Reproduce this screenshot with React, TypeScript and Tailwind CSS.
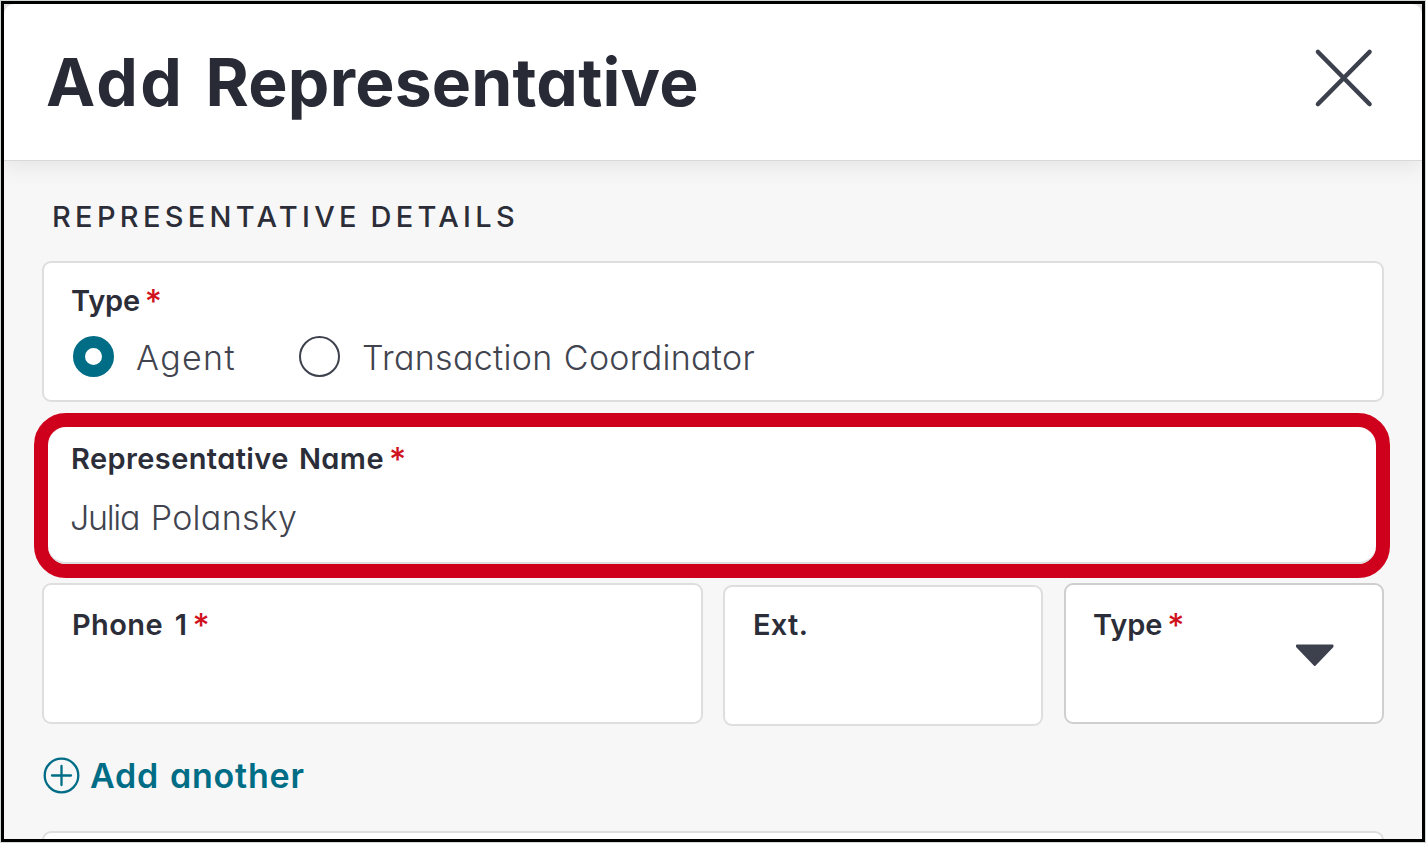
import { useState } from 'react';
import type { ReactNode } from 'react';
import clsx from 'clsx';

interface FieldLabelProps {
  text: string;
  required?: boolean;
  className?: string;
}

const FieldLabel = ({ text, required, className }: FieldLabelProps) => (
  <div className="flex h-8 items-center text-[29px] leading-8 font-[580] text-[#2b2d38]">
    <span className={className}>{text}</span>
    {required && (
      <span className="ml-[5px] text-[33px] font-medium text-[#d0131f]">*</span>
    )}
  </div>
);

interface RadioProps {
  label: string;
  checked: boolean;
  onSelect: () => void;
  className?: string;
}

const Radio = ({ label, checked, onSelect, className }: RadioProps) => (
  <button
    type="button"
    role="radio"
    aria-checked={checked}
    onClick={onSelect}
    className="flex h-[41px] items-center"
  >
    <span
      className={clsx(
        '-mt-[2px] size-[41px] shrink-0 rounded-full bg-white',
        checked
          ? 'border-[12px] border-[#006d86]'
          : 'border-[2.5px] border-[#3d414d]'
      )}
    />
    <span
      className={clsx(
        'ml-[22px] text-[34px] leading-10 font-[350] text-[#41444f]',
        className
      )}
    >
      {label}
    </span>
  </button>
);

const Card = ({
  children,
  className,
}: {
  children?: ReactNode;
  className?: string;
}) => (
  <div
    className={clsx(
      'h-[141px] shrink-0 rounded-[9px] border-2 bg-white pl-7',
      className
    )}
  >
    {children}
  </div>
);

const App = () => {
  const [type, setType] = useState('agent');

  return (
    <div className="h-[843px] w-[1426px] overflow-hidden bg-[#d3dad5] p-px font-['Inter',sans-serif] [font-feature-settings:'cv11']">
      <div className="flex h-[841px] w-[1424px] flex-col overflow-hidden border-[3px] border-black bg-[#e3e3e3]">
        <header className="z-10 flex h-[157px] shrink-0 items-center justify-between rounded-t-[10px] border-b border-[#d9d9d9] bg-white pr-[48px] pl-[42px] shadow-[0_6px_22px_rgba(0,0,0,0.08)]">
          <h1 className="text-[66px] leading-none font-bold text-[#282a35] [word-spacing:5.5px]">
            <span className="tracking-[2.5px]">Add</span>{' '}
            <span className="tracking-[0.2px]">Representative</span>
          </h1>
          <button type="button" aria-label="Close" className="-mt-[9px]">
            <svg
              className="block size-[60px]"
              viewBox="0 0 60 60"
              fill="none"
              stroke="#3d414d"
              strokeWidth="4.6"
              strokeLinecap="round"
            >
              <path d="M4 4 55.500 56M55.500 4 4 56" />
            </svg>
          </button>
        </header>

        <main className="flex min-h-0 flex-1 flex-col bg-[#f7f7f7] pr-[38px] pl-[38px]">
          <h2 className="mt-[40px] ml-[10px] text-[29px] leading-8 font-medium tracking-[4.3px] text-[#2b2d38] [word-spacing:-2.5px]">
            REPRESENTATIVE DETAILS
          </h2>

          <Card className="mt-[28px] border-[#dedede] pt-[22px]">
            <FieldLabel
              text="Type"
              required
              className="-ml-px tracking-[-0.2px]"
            />
            <div className="mt-5 flex gap-[63px] pl-px">
              <Radio
                label="Agent"
                checked={type === 'agent'}
                onSelect={() => setType('agent')}
                className="tracking-[1.4px]"
              />
              <Radio
                label="Transaction Coordinator"
                checked={type === 'coordinator'}
                onSelect={() => setType('coordinator')}
                className="tracking-[0.3px] [word-spacing:1.5px]"
              />
            </div>
          </Card>

          <div className="-mx-2 mt-[11px] h-[165px] w-[1356px] shrink-0 rounded-[32px] border-[14px] border-[#ce001c] bg-white">
            <div className="flex h-full flex-col rounded-b-[18px] border-b-2 border-[#dedede] pt-4 pl-[23px]">
              <FieldLabel
                text="Representative Name"
                required
                className="tracking-[0.4px] [word-spacing:2.5px]"
              />
              <div className="mt-[23px] -ml-px text-[34px] leading-10 font-[350] text-[#41444f]">
                <span className="tracking-[-1.3px]">Julia</span>{' '}
                <span className="ml-[2px] tracking-[0.3px]">Polansky</span>
              </div>
            </div>
          </div>

          <div className="mt-[5px] flex shrink-0">
            <Card className="w-[661px] border-[#dedede] pt-[24px]">
              <FieldLabel
                text="Phone 1"
                required
                className="tracking-[0.4px] [word-spacing:4px]"
              />
            </Card>
            <Card className="mt-[2px] ml-5 w-[320px] border-[#dedede] pt-[22px]">
              <FieldLabel text="Ext." className="tracking-[0.3px]" />
            </Card>
            <Card className="ml-[21px] flex w-[320px] justify-between border-[#cfcfcf] pt-[24px] pr-[47px]">
              <FieldLabel
                text="Type"
                required
                className="-ml-px tracking-[-0.1px]"
              />
              <svg
                className="mt-[34px] block h-6 w-10"
                viewBox="0 0 40 24"
                fill="#3d414d"
                stroke="#3d414d"
                strokeWidth="2"
                strokeLinejoin="round"
              >
                <path d="M2 2.500H37.500V3.500L19.750 22 2 3.500Z" />
              </svg>
            </Card>
          </div>

          <button
            type="button"
            className="mt-[29px] flex h-10 shrink-0 items-center self-start text-[#006d86]"
          >
            <svg
              className="ml-px block size-[37px]"
              viewBox="0 0 37 37"
              fill="none"
              stroke="currentColor"
              strokeWidth="2.3"
              strokeLinecap="round"
            >
              <circle cx="18.500" cy="18.500" r="16.800" />
              <path d="M9 18.500H28M18.500 9V28" />
            </svg>
            <span className="mt-[2px] ml-[10px] text-[34px] leading-10 font-semibold tracking-[0.8px] [word-spacing:1.5px]">
              Add another
            </span>
          </button>

          <Card className="mt-[36px] border-[#dedede]" />
        </main>
      </div>
    </div>
  );
};

export default App;
